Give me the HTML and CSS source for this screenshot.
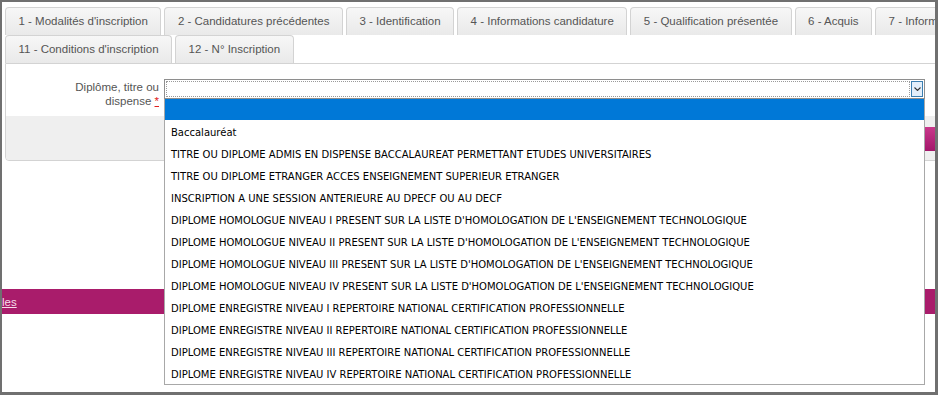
FILE: index.html
```html
<!DOCTYPE html>
<html lang="fr">
  <head>
    <meta charset="UTF-8" />
    <title>Inscription - Diplôme</title>
    <link rel="stylesheet" href="styles.css">
  </head>
  <body>
    <div class="frame">
      <div class="content">
        <ul class="tabs">
          <li class="tab">1 - Modalités d'inscription</li>
          <li class="tab">2 - Candidatures précédentes</li>
          <li class="tab">3 - Identification</li>
          <li class="tab">4 - Informations candidature</li>
          <li class="tab">5 - Qualification présentée</li>
          <li class="tab">6 - Acquis</li>
          <li class="tab">7 - Informations complémentaires</li>
        </ul>
        <ul class="tabs">
          <li class="tab">11 - Conditions d'inscription</li>
          <li class="tab">12 - N° Inscription</li>
        </ul>

        <div class="panel">
          <div class="form-row">
            <label class="form-label">Diplôme, titre ou dispense <abbr class="required">*</abbr></label>
            <div class="field">
              <div class="select">
                <span class="select-value"></span>
                <span class="select-arrow">
                  <svg width="7" height="4" viewBox="0 0 7 4"><path d="M0.5 0.5 L3.5 3.5 L6.5 0.5" fill="none" stroke="#333" stroke-width="1.1"/></svg>
                </span>
              </div>
              <ul class="options">
                <li class="option active"></li>
                <li class="option">Baccalauréat</li>
                <li class="option">TITRE OU DIPLOME ADMIS EN DISPENSE BACCALAUREAT PERMETTANT ETUDES UNIVERSITAIRES</li>
                <li class="option">TITRE OU DIPLOME ETRANGER ACCES ENSEIGNEMENT SUPERIEUR ETRANGER</li>
                <li class="option">INSCRIPTION A UNE SESSION ANTERIEURE AU DPECF OU AU DECF</li>
                <li class="option">DIPLOME HOMOLOGUE NIVEAU I PRESENT SUR LA LISTE D'HOMOLOGATION DE L'ENSEIGNEMENT TECHNOLOGIQUE</li>
                <li class="option">DIPLOME HOMOLOGUE NIVEAU II PRESENT SUR LA LISTE D'HOMOLOGATION DE L'ENSEIGNEMENT TECHNOLOGIQUE</li>
                <li class="option">DIPLOME HOMOLOGUE NIVEAU III PRESENT SUR LA LISTE D'HOMOLOGATION DE L'ENSEIGNEMENT TECHNOLOGIQUE</li>
                <li class="option">DIPLOME HOMOLOGUE NIVEAU IV PRESENT SUR LA LISTE D'HOMOLOGATION DE L'ENSEIGNEMENT TECHNOLOGIQUE</li>
                <li class="option">DIPLOME ENREGISTRE NIVEAU I REPERTOIRE NATIONAL CERTIFICATION PROFESSIONNELLE</li>
                <li class="option">DIPLOME ENREGISTRE NIVEAU II REPERTOIRE NATIONAL CERTIFICATION PROFESSIONNELLE</li>
                <li class="option">DIPLOME ENREGISTRE NIVEAU III REPERTOIRE NATIONAL CERTIFICATION PROFESSIONNELLE</li>
                <li class="option">DIPLOME ENREGISTRE NIVEAU IV REPERTOIRE NATIONAL CERTIFICATION PROFESSIONNELLE</li>
              </ul>
            </div>
          </div>
          <div class="form-actions">
            <span></span>
            <span></span>
            <button class="btn-next" type="button">Suivant</button>
          </div>
        </div>
      </div>

      <div class="footer-bar">
        <a href="#">les</a>
      </div>
    </div>
  </body>
</html>
```

FILE: styles.css
```css
* {
  box-sizing: border-box;
  margin: 0;
  padding: 0;
}

body {
  font-family: "Liberation Sans", Arial, sans-serif;
  font-size: 11.5px;
  color: #555;
  background: #fff;
}

.frame {
  width: 938px;
  height: 395px;
  border: 2px solid #707070;
  border-right-width: 3px;
  border-bottom-width: 3px;
  overflow: hidden;
  position: relative;
}

.content {
  padding: 5px 0 0 3px;
  width: 1200px;
}

/* Onglets */
.tabs {
  display: flex;
  list-style: none;
  gap: 3px;
  white-space: nowrap;
}

.tab {
  height: 28px;
  line-height: 27px;
  padding: 0 12.5px;
  border: 1px solid #d3d3d3;
  border-bottom: none;
  border-radius: 4px 4px 0 0;
  background: linear-gradient(#f7f7f7, #e9e9e9);
  color: #555;
}

/* Panneau */
.panel {
  border: 1px solid #d3d3d3;
  border-radius: 0 0 4px 4px;
  width: 1100px;
}

.form-row {
  display: grid;
  grid-template-columns: 153px 761px;
  column-gap: 5px;
  height: 52px;
  padding-top: 15px;
}

.form-label {
  text-align: right;
  line-height: 13.5px;
  padding: 2px 0 0 62px;
  color: #555;
}

.required {
  color: #e02020;
  text-decoration: underline;
  border: none;
}

.field {
  position: relative;
}

.select {
  height: 20px;
  border: 1px solid #8e8e8e;
  background: #fff;
  display: flex;
  padding: 1px;
}

.select-value {
  flex: 1;
  border: 1px dotted #9a9a9a;
}

.select-arrow {
  width: 12px;
  margin-left: 1px;
  background: #e3effb;
  border: 1px solid #3c7fb1;
  display: flex;
  align-items: center;
  justify-content: center;
}

/* Liste déroulante ouverte */
.options {
  position: absolute;
  top: 20px;
  left: 0;
  width: 761px;
  list-style: none;
  background: #fff;
  border: 1px solid #a8a8a8;
  border-top: none;
  z-index: 5;
  font-family: "DejaVu Sans", Tahoma, sans-serif;
  font-size: 10px;
  color: #000;
}

.option {
  height: 22px;
  line-height: 22px;
  padding: 2px 0 0 6px;
  white-space: nowrap;
}

.option.active {
  background: #0078d7;
  height: 21px;
}

.form-actions {
  display: grid;
  grid-template-columns: 153px 761px auto;
  column-gap: 1px;
  background: #efefef;
  height: 44px;
  padding-top: 11px;
  border-radius: 0 0 4px 4px;
}

.btn-next {
  height: 24px;
  width: 90px;
  border: none;
  border-radius: 3px;
  background: linear-gradient(#c9388b, #a3166a);
  color: #fff;
  font-family: inherit;
  font-size: 11.5px;
}

/* Barre du bas */
.footer-bar {
  margin-top: 128px;
  height: 25px;
  background: #a91c6b;
  line-height: 27px;
}

.footer-bar a {
  color: #f7dcea;
  font-size: 11.5px;
}
```
